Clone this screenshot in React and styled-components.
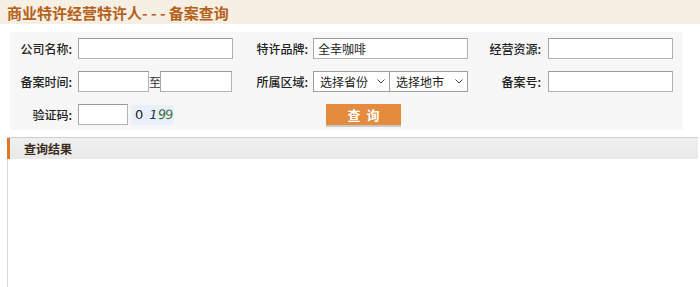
import React from "react";
import styled, { createGlobalStyle } from "styled-components";

const GlobalStyle = createGlobalStyle`
  html, body {
    margin: 0;
    padding: 0;
    background: #ffffff;
    font-family: "Noto Sans CJK SC", "Noto Sans", sans-serif;
    font-size: 12px;
    color: #333333;
  }
`;

const Page = styled.div`
  width: 700px;
  height: 287px;
  overflow: hidden;
  display: flex;
  flex-flow: column nowrap;
`;

const TitleBar = styled.div`
  height: 24px;
  background: #f6efe3;
  display: flex;
  align-items: center;
  padding-left: 7px;
  margin-bottom: 8px;
  h1 {
    margin: 0;
    font-size: 15px;
    font-weight: 700;
    color: #b5611c;
    letter-spacing: 0;
  }
`;

const Panel = styled.div`
  margin-left: 10px;
  width: 673px;
  height: 98px;
  box-sizing: border-box;
  background: #f7f7f7;
  padding-top: 6px;
  display: grid;
  grid-template-columns: 68px 155px 80px 155px 80px 125px;
  grid-auto-rows: 33px;
  align-items: start;
`;

const Label = styled.label`
  height: 21px;
  line-height: 21px;
  text-align: right;
  padding-right: ${(p) => p.$pad || 6}px;
  color: #222;
  font-weight: 500;
  white-space: nowrap;
`;

const Field = styled.input`
  box-sizing: border-box;
  width: ${(p) => p.$w || 155}px;
  height: 21px;
  margin: 0;
  padding: 0 4px;
  border: 1px solid #b3b3b3;
  border-top-color: #9a9a9a;
  border-left-color: #a6a6a6;
  background: #fff;
  font-family: inherit;
  font-size: 12px;
  color: #222;
  outline: none;
`;

const Cell = styled.div`
  display: flex;
  align-items: center;
  height: 21px;
`;

const To = styled.span`
  width: 11px;
  text-align: center;
  line-height: 21px;
`;

const Select = styled.div`
  box-sizing: border-box;
  width: ${(p) => p.$w}px;
  height: 21px;
  border: 1px solid #9f9f9f;
  background: #fff;
  display: flex;
  align-items: center;
  justify-content: space-between;
  padding: 0 4px 0 6px;
  color: #222;
  & + & {
    border-left: none;
  }
  svg {
    width: 8px;
    height: 5px;
  }
`;

const Captcha = styled.div`
  margin-left: 3px;
  width: 43px;
  height: 20px;
  background: #e9f0fa;
  display: flex;
  align-items: center;
  padding-left: 4px;
  box-sizing: border-box;
  font-family: "DejaVu Sans", sans-serif;
  font-size: 13px;
  span {
    display: inline-block;
  }
`;

const Digit = styled.span`
  color: ${(p) => p.$c || "#222"};
  font-style: ${(p) => (p.$i ? "italic" : "normal")};
  margin-right: ${(p) => p.$m || 0}px;
  letter-spacing: -1px;
  transform: ${(p) => (p.$rot ? `rotate(${p.$rot}deg)` : "none")};
`;

const SearchButton = styled.button`
  margin: -1px 0 0 13px;
  width: 75px;
  height: 21px;
  border: none;
  background: #e48b3d;
  box-shadow: 0 2px 0 #c9c9c9;
  color: #fff;
  font-family: inherit;
  font-weight: 700;
  font-size: 13px;
  letter-spacing: 6px;
  padding: 0 0 0 6px;
  cursor: pointer;
`;

const Results = styled.div`
  margin: 7px 2px 0 7px;
  flex: 1;
  border-top: 1px solid #cfcfcf;
  border-left: 1px solid #d8d8d8;
`;

const ResultsHead = styled.div`
  height: 21px;
  background: linear-gradient(#efefef, #e9e9e9);
  border-left: 3px solid #e0782a;
  margin-left: -1px;
  display: flex;
  align-items: center;
  padding-left: 14px;
  font-weight: 700;
  color: #3a2a1a;
`;

const Chevron = () => (
  <svg viewBox="0 0 8 5">
    <path d="M0.5 0.5 L4 4 L7.5 0.5" fill="none" stroke="#444" strokeWidth="1" />
  </svg>
);

export default function App() {
  return (
    <Page>
      <GlobalStyle />
      <TitleBar>
        <h1>商业特许经营特许人- - - 备案查询</h1>
      </TitleBar>
      <Panel>
        <Label>公司名称:</Label>
        <Field />
        <Label $pad={5}>特许品牌:</Label>
        <Field defaultValue="全幸咖啡" />
        <Label $pad={7}>经营资源:</Label>
        <Field $w={125} />

        <Label>备案时间:</Label>
        <Cell>
          <Field $w={71} />
          <To>至</To>
          <Field $w={72} />
        </Cell>
        <Label $pad={5}>所属区域:</Label>
        <Cell>
          <Select $w={77}>
            选择省份
            <Chevron />
          </Select>
          <Select $w={78}>
            选择地市
            <Chevron />
          </Select>
        </Cell>
        <Label $pad={7}>备案号:</Label>
        <Field $w={125} />

        <Label>验证码:</Label>
        <Cell>
          <Field $w={50} />
          <Captcha>
            <Digit $m={7}>0</Digit>
            <Digit $i $c="#1d3b4a" $m={1}>1</Digit>
            <Digit $i $c="#3d6b3a" $rot={-6}>9</Digit>
            <Digit $c="#4f7a48" $rot={4}>9</Digit>
          </Captcha>
        </Cell>
        <div />
        <Cell>
          <SearchButton>查询</SearchButton>
        </Cell>
      </Panel>
      <Results>
        <ResultsHead>查询结果</ResultsHead>
      </Results>
    </Page>
  );
}
